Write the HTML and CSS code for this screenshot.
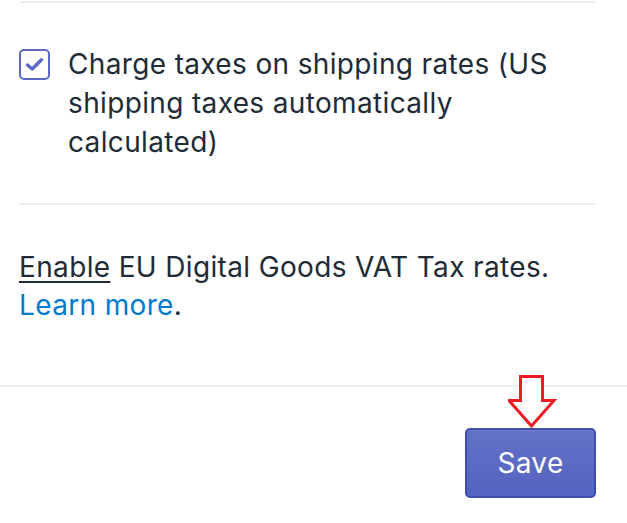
FILE: index.html
```html
<!DOCTYPE html>
<html>
<head>
<meta charset="utf-8">
<link rel="stylesheet" href="styles.css">
</head>
<body>
<div class="card">
  <div class="section">
    <div class="divider"></div>
    <label class="check-row">
      <span class="checkbox">
        <svg width="19" height="15" viewBox="0 0 19 15"><path d="M2.5 8 L7.2 12 L16.5 2.8" fill="none" stroke="#5c6ac4" stroke-width="3.4" stroke-linecap="round" stroke-linejoin="round"/></svg>
      </span>
      <span class="check-label">Charge taxes on shipping rates (US shipping taxes automatically calculated)</span>
    </label>
    <div class="divider divider-2"></div>
    <p class="note"><span class="underline">Enable</span> EU Digital Goods VAT Tax rates. <a class="link">Learn more</a>.</p>
  </div>
  <div class="footer">
    <button class="save">Save</button>
    <svg class="arrow" width="50" height="56" viewBox="0 0 50 56">
      <path d="M12.5 1.5 H34.5 V25.5 H46 L23.5 51 L1 25.5 H12.5 Z" fill="#fff" stroke="#ed1c24" stroke-width="3"/>
    </svg>
  </div>
</div>
</body>
</html>
```
FILE: styles.css
```css
html, body {
  margin: 0;
  padding: 0;
  background: #fff;
}
body {
  width: 627px;
  height: 523px;
  overflow: hidden;
  font-family: "Inter", "Roboto", sans-serif;
  color: #212b36;
}
.card {
  display: flex;
  flex-direction: column;
}
.section {
  padding: 1px 31px 0 19px;
}
.divider {
  height: 2px;
  background: #eceff2;
}
.check-row {
  display: flex;
  align-items: flex-start;
  gap: 18px;
  margin-top: 46px;
}
.checkbox {
  flex: none;
  width: 27px;
  height: 27px;
  border: 2px solid #5c6ac4;
  border-radius: 5px;
  display: flex;
  align-items: center;
  justify-content: center;
}
.check-label {
  font-size: 28px;
  line-height: 39px;
  margin-top: -4px;
  letter-spacing: 0.35px;
}
.divider-2 {
  margin-top: 41px;
}
.note {
  margin: 43px 0 0 0;
  font-size: 28px;
  line-height: 38px;
  letter-spacing: 0.35px;
}
.underline {
  text-decoration: underline;
  text-underline-offset: 4px;
  text-decoration-thickness: 2px;
}
.link {
  color: #007ace;
}
.footer {
  position: relative;
  margin-top: 61px;
  border-top: 2px solid #eceff2;
  display: flex;
  justify-content: flex-end;
  padding: 41px 31px 0 0;
}
.save {
  width: 131px;
  height: 70px;
  border: 2px solid #3f4eae;
  border-radius: 5px;
  background: linear-gradient(#6371c7, #5563c1);
  color: #fff;
  font-family: "Inter", "Roboto", sans-serif;
  font-size: 28px;
  letter-spacing: 0.35px;
  padding: 0;
  box-shadow: inset 0 1px 0 #6f7bcb;
}
.arrow {
  position: absolute;
  left: 508px;
  top: -12px;
}
```
